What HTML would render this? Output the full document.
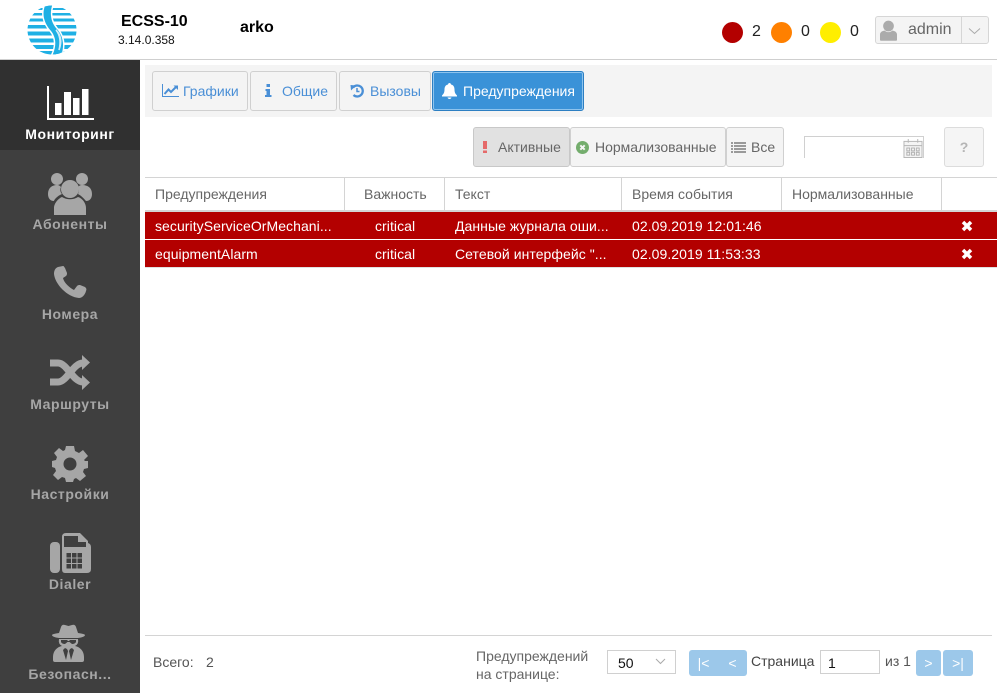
<!DOCTYPE html>
<html><head><meta charset="utf-8"><style>
*{box-sizing:border-box}
html,body{margin:0;padding:0;width:997px;height:693px;overflow:hidden;background:#fff;font-family:"Liberation Sans",sans-serif;font-size:14px;color:#333}
.a{position:absolute;white-space:nowrap}
.btn{position:absolute;background:#f4f4f4;border:1px solid #d0d0d0;border-radius:3px;height:40px;line-height:38px;color:#666;white-space:nowrap}
.btn svg{position:absolute}
.btn span{position:absolute;top:0}
.tab{color:#4a8fd6}
.nl{position:absolute;left:0;width:140px;text-align:center;font-weight:bold;color:#a6a6a6;font-size:14px;white-space:nowrap;letter-spacing:.55px}
.th{position:absolute;top:186px;color:#666;line-height:16px}
.td{position:absolute;color:#fff;line-height:16px;white-space:nowrap;letter-spacing:.06px}
.v{position:absolute;width:1px;background:#d4d4d4;top:178px;height:32px}
.pg{position:absolute;top:650px;height:26px;background:#9cc8ea;border-radius:3px;color:#fff;text-align:center;line-height:26px;font-size:14px}
</style></head><body>

<!-- header -->
<svg class="a" style="left:26px;top:4px" width="52" height="52" viewBox="0 0 52 52">
<defs><clipPath id="c"><circle cx="26" cy="26" r="24.500"/></clipPath></defs>
<g clip-path="url(#c)">
<g fill="#1fb0e4">
<rect x="0" y="4" width="52" height="2"/><rect x="0" y="9" width="52" height="2.500"/><rect x="0" y="14.500" width="52" height="3"/><rect x="0" y="21" width="52" height="3.500"/><rect x="0" y="27.500" width="52" height="4"/><rect x="0" y="34.500" width="52" height="4"/><rect x="0" y="41" width="52" height="4"/><rect x="0" y="47" width="52" height="5"/>
</g>
<path d="M20 -1C15 10 18 19 25 27C30 33 31 42 26 52L35 52C39 41 37 31 30 24C25 18 23 9 27 -1Z" fill="#1fb0e4" stroke="#fff" stroke-width="3"/>
<path d="M20 -1C15 10 18 19 25 27C30 33 31 42 26 52L35 52C39 41 37 31 30 24C25 18 23 9 27 -1Z" fill="#1fb0e4"/>
<path d="M30 26C34 31 35 38 33 46C36 38 35 31 30 26Z" fill="#fff" stroke="#d5eef9" stroke-width="1.500"/>
</g></svg>
<div class="a" style="left:121px;top:13px;font-size:16px;font-weight:bold;color:#000;line-height:18px">ECSS-10</div>
<div class="a" style="left:118px;top:33px;font-size:12px;color:#111;line-height:14px">3.14.0.358</div>
<div class="a" style="left:240px;top:19px;font-size:16px;font-weight:bold;color:#000;line-height:18px">arko</div>

<div class="a" style="left:722px;top:22px;width:21px;height:21px;border-radius:50%;background:#b30000"></div>
<div class="a" style="left:752px;top:23px;font-size:16px;color:#222;line-height:18px">2</div>
<div class="a" style="left:771px;top:22px;width:21px;height:21px;border-radius:50%;background:#ff8000"></div>
<div class="a" style="left:801px;top:23px;font-size:16px;color:#222;line-height:18px">0</div>
<div class="a" style="left:820px;top:22px;width:21px;height:21px;border-radius:50%;background:#ffee00"></div>
<div class="a" style="left:850px;top:23px;font-size:16px;color:#222;line-height:18px">0</div>

<div class="a" style="left:875px;top:16px;width:114px;height:28px;background:#f4f4f4;border:1px solid #d6d6d6;border-radius:3px"></div>
<div class="a" style="left:961px;top:17px;width:1px;height:26px;background:#d6d6d6"></div>
<svg class="a" style="left:880px;top:20px" width="17" height="21" viewBox="0 0 19 23"><circle cx="9.500" cy="6.500" r="6" fill="#ababab"/><path d="M0 22V16C0 13 3 12 5 11.500C8 14 11 14 14 11.500C16 12 19 13 19 16V22Q19 23 18 23H1Q0 23 0 22Z" fill="#ababab"/></svg>
<div class="a" style="left:908px;top:21px;font-size:16px;color:#666;line-height:18px">admin</div>
<svg class="a" style="left:968px;top:27px" width="13" height="8" viewBox="0 0 13 8"><path d="M1 1.500L6.500 6.500L12 1.500" fill="none" stroke="#aaa" stroke-width="1"/></svg>
<div class="a" style="left:0;top:59px;width:997px;height:1px;background:#cfcfcf"></div>

<!-- sidebar -->
<div class="a" style="left:0;top:60px;width:140px;height:633px;background:#3f3f3f"></div>
<div class="a" style="left:0;top:60px;width:140px;height:90px;background:#303030"></div>
<svg class="a" style="left:47px;top:86px" width="47" height="35" viewBox="0 0 47 35"><path d="M0 0H2V32H47V34H0Z" fill="#fff"/><rect x="8" y="17" width="6.500" height="12" fill="#fff"/><rect x="17" y="6" width="7" height="23" fill="#fff"/><rect x="26" y="12" width="6.500" height="17" fill="#fff"/><rect x="35" y="3" width="6.500" height="26" fill="#fff"/></svg>
<div class="nl" style="top:126px;color:#fff;line-height:16px">Мониторинг</div>

<svg class="a" style="left:48px;top:173px" width="44" height="42" viewBox="0 0 44 42" fill="#a6a6a6"><circle cx="9" cy="6" r="6"/><circle cx="34" cy="6" r="6"/><path d="M0 21C0 15 4 12 9 12C11 12 12 13 13 14C12 16 12 19 14 21C9 23 6 27 6 28C2 28 0 25 0 21Z"/><path d="M44 21C44 15 40 12 34 12C32 12 31 13 30 14C31 16 31 19 30 21C34 23 37 27 38 28C42 28 44 25 44 21Z"/><circle cx="22" cy="16" r="9"/><path d="M6 42V35C6 30 11 25 14 24C19 27 25 27 30 24C34 25 38 30 38 35V42Z"/></svg>
<div class="nl" style="top:216px;line-height:16px">Абоненты</div>

<svg class="a" style="left:53px;top:266px" width="34" height="33" viewBox="0 0 34 33" fill="#a6a6a6"><path d="M5 1L10 0C11 0 11 1 12 2L14 7C14 8 14 9 13 10L10 12C11 17 17 22 21 24L24 20C25 19 26 19 27 19L32 21C33 22 34 23 33 25C32 29 29 32 26 32C14 31 2 18 1 8C1 5 2 2 5 1Z"/></svg>
<div class="nl" style="top:306px;line-height:16px">Номера</div>

<svg class="a" style="left:49px;top:354px" width="42" height="37" viewBox="0 0 42 37"><path d="M1 9H9C18 9 24 28 34 28M1 28H9C18 28 24 9 34 9" fill="none" stroke="#a6a6a6" stroke-width="7"/><path d="M33 1L41 8.500L33 16ZM33 21L41 28.500L33 36Z" fill="#a6a6a6"/></svg>
<div class="nl" style="top:396px;line-height:16px">Маршруты</div>

<svg class="a" style="left:52px;top:446px" width="36" height="36" viewBox="0 0 36 36"><path fill="#a6a6a6" fill-rule="evenodd" d="M14 0H22L23 5L27 7L31 4L36 10L32 14L33 15L36 15V22L32 23L31 26L34 30L28 35L24 32L22 33L21 36H14L13 32L10 31L6 34L1 29L4 25L3 22L0 21V15L4 14L5 11L2 7L7 2L11 5L13 4ZM18 11.500A6.500 6.500 0 1 0 18 24.500A6.500 6.500 0 1 0 18 11.500Z"/></svg>
<div class="nl" style="top:486px;line-height:16px">Настройки</div>

<svg class="a" style="left:50px;top:533px" width="41" height="41" viewBox="0 0 41 41"><rect x="0" y="9" width="10" height="31" rx="4" fill="#a6a6a6"/><path d="M12 4Q12 0 16 0H30L38 8V10Q41 11 41 14V36Q41 40 37 40H15Q12 40 12 36Z" fill="#a6a6a6"/><path d="M14 3H28V9H36V14H14Z" fill="#3f3f3f"/><g fill="#3f3f3f"><rect x="16.500" y="20" width="4.500" height="4.500"/><rect x="22" y="20" width="4.500" height="4.500"/><rect x="27.500" y="20" width="4.500" height="4.500"/><rect x="16.500" y="25.500" width="4.500" height="4.500"/><rect x="22" y="25.500" width="4.500" height="4.500"/><rect x="27.500" y="25.500" width="4.500" height="4.500"/><rect x="16.500" y="31" width="4.500" height="4.500"/><rect x="22" y="31" width="4.500" height="4.500"/><rect x="27.500" y="31" width="4.500" height="4.500"/></g></svg>
<div class="nl" style="top:576px;line-height:16px">Dialer</div>

<svg class="a" style="left:52px;top:624px" width="33" height="38" viewBox="0 0 33 38"><path fill="#a6a6a6" d="M9 3Q10 0 13 1L16.500 2L20 1Q23 0 24 3L26 9Q33 10 33 11Q33 13 26 14H7Q0 13 0 11Q0 10 7 9Z"/><path fill="#a6a6a6" d="M7 15H26Q27 20 23 22C28 23 32 27 32 33V36Q32 38 30 38H3Q1 38 1 36V33C1 27 5 23 10 22Q6 20 7 15Z"/><path fill="#3f3f3f" d="M9 16H15L16 17H17L18 16H24V18Q23 20 20 20L17.500 18H15.500L13 20Q10 20 9 18Z"/><path fill="#3f3f3f" d="M13 24L15 25L16 27L14 36L11 26ZM20 24L18 25L17 27L19 36L22 26Z"/></svg>
<div class="nl" style="top:666px;line-height:16px">Безопасн...</div>

<!-- tabs -->
<div class="a" style="left:145px;top:65px;width:847px;height:52px;background:#f4f4f4"></div>
<div class="btn tab" style="left:152px;top:71px;width:96px">
<svg style="left:9px;top:12px" width="17" height="13" viewBox="0 0 17 13"><path d="M0.500 0V12.500H17" fill="none" stroke="#4a8fd6" stroke-width="1"/><path d="M2.500 10L6.500 5.500L9 8L14 3" fill="none" stroke="#4a8fd6" stroke-width="2"/><path d="M11.500 1.500H16V6Z" fill="#4a8fd6"/></svg>
<span style="left:30px">Графики</span></div>
<div class="btn tab" style="left:250px;top:71px;width:87px">
<svg style="left:13px;top:12px" width="8" height="13" viewBox="0 0 8 13" fill="#4a8fd6"><rect x="2.500" y="0" width="3.500" height="3"/><path d="M1.500 5H6V11H7.500V13H1V11H2.500V7H1.500Z"/></svg>
<span style="left:31px">Общие</span></div>
<div class="btn tab" style="left:339px;top:71px;width:92px">
<svg style="left:10px;top:12px" width="14" height="14" viewBox="0 0 14 14"><path d="M3 3.500A5.500 5.500 0 1 1 3.500 11" fill="none" stroke="#4a8fd6" stroke-width="2.300"/><path d="M0.500 1L6 1.500L1 6.500Z" fill="#4a8fd6"/><path d="M7 4V7.500H9.500" fill="none" stroke="#4a8fd6" stroke-width="1.500"/></svg>
<span style="left:30px">Вызовы</span></div>
<div class="btn" style="left:432px;top:71px;width:152px;background:#3a92d8;border-color:#2d7fc2;box-shadow:inset 0 0 0 1px #8ec4ee;color:#fff">
<svg style="left:9px;top:11px" width="15" height="16" viewBox="0 0 15 16" fill="#fff"><path d="M7.500 0C8.500 0 9 1 9 1.500C11.500 2 12.500 4 12.500 6.500C12.500 9.500 13.500 11 15 12.500V13.500H0V12.500C1.500 11 2.500 9.500 2.500 6.500C2.500 4 3.500 2 6 1.500C6 1 6.500 0 7.500 0Z"/><path d="M5.500 14.500H9.500Q9 16 7.500 16Q6 16 5.500 14.500Z"/></svg>
<span style="left:30px">Предупреждения</span></div>

<!-- filter -->
<div class="btn" style="left:473px;top:127px;width:97px;background:#e1e1e1;border-color:#c8c8c8">
<svg style="left:9px;top:13px" width="4" height="12" viewBox="0 0 4 12" fill="#e56a6a"><rect x="0" y="0" width="4" height="8"/><rect x="0" y="9.500" width="4" height="2.500"/></svg>
<span style="left:24px">Активные</span></div>
<div class="btn" style="left:570px;top:127px;width:156px">
<svg style="left:5px;top:13px" width="13" height="13" viewBox="0 0 13 13"><circle cx="6.500" cy="6.500" r="6.500" fill="#74ad6d"/><path d="M4.300 4.300L8.700 8.700M8.700 4.300L4.300 8.700" stroke="#f4f4f4" stroke-width="2"/></svg>
<span style="left:24px">Нормализованные</span></div>
<div class="btn" style="left:726px;top:127px;width:58px">
<svg style="left:4px;top:14px" width="15" height="11" viewBox="0 0 15 11" fill="#9a9a9a"><rect x="0" y="0" width="2" height="2"/><rect x="3" y="0" width="12" height="2"/><rect x="0" y="3" width="2" height="2"/><rect x="3" y="3" width="12" height="2"/><rect x="0" y="6" width="2" height="2"/><rect x="3" y="6" width="12" height="2"/><rect x="0" y="9" width="2" height="2"/><rect x="3" y="9" width="12" height="2"/></svg>
<span style="left:24px">Все</span></div>

<div class="a" style="left:804px;top:136px;width:120px;height:22px;border-top:1px solid #d0d0d0;border-left:1px solid #d0d0d0;border-right:1px solid #d0d0d0"></div>
<svg class="a" style="left:903px;top:139px" width="20" height="19" viewBox="0 0 20 20"><rect x="0.500" y="2.500" width="19" height="17" fill="#f4f4f4" stroke="#b5b5b5"/><path d="M0.500 7H19.500M5 0V4M15 0V4" stroke="#b5b5b5"/><g fill="none" stroke="#b0b0b0"><rect x="3.500" y="9.500" width="3" height="3"/><rect x="8.500" y="9.500" width="3" height="3"/><rect x="13.500" y="9.500" width="3" height="3"/><rect x="3.500" y="14" width="3" height="3"/><rect x="8.500" y="14" width="3" height="3"/><rect x="13.500" y="14" width="3" height="3"/></g></svg>
<div class="btn" style="left:944px;top:127px;width:40px;text-align:center;color:#b5b5b5;font-weight:bold;font-size:14px;background:#f5f5f5;border-color:#dcdcdc">?</div>

<!-- table -->
<div class="a" style="left:145px;top:177px;width:852px;height:1px;background:#d4d4d4"></div>
<div class="a" style="left:145px;top:210px;width:852px;height:2px;background:#d4d4d4"></div>
<div class="v" style="left:344px"></div><div class="v" style="left:444px"></div><div class="v" style="left:621px"></div><div class="v" style="left:781px"></div><div class="v" style="left:941px"></div>
<div class="th" style="left:155px">Предупреждения</div>
<div class="th" style="left:364px">Важность</div>
<div class="th" style="left:455px">Текст</div>
<div class="th" style="left:632px">Время события</div>
<div class="th" style="left:792px">Нормализованные</div>

<div class="a" style="left:145px;top:212px;width:852px;height:27px;background:#b30000"></div>
<div class="a" style="left:145px;top:240px;width:852px;height:27px;background:#b30000"></div>
<div class="a" style="left:145px;top:267px;width:852px;height:1px;background:#e0e0e0"></div>
<div class="td" style="left:155px;top:218px">securityServiceOrMechani...</div>
<div class="td" style="left:375px;top:218px">critical</div>
<div class="td" style="left:455px;top:218px">Данные журнала оши...</div>
<div class="td" style="left:632px;top:218px">02.09.2019 12:01:46</div>
<svg class="a" style="left:961px;top:220px" width="12" height="12" viewBox="0 0 12 12"><path d="M2 2L10 10M10 2L2 10" stroke="#fff" stroke-width="3.500"/></svg>
<div class="td" style="left:155px;top:246px">equipmentAlarm</div>
<div class="td" style="left:375px;top:246px">critical</div>
<div class="td" style="left:455px;top:246px">Сетевой интерфейс "...</div>
<div class="td" style="left:632px;top:246px">02.09.2019 11:53:33</div>
<svg class="a" style="left:961px;top:248px" width="12" height="12" viewBox="0 0 12 12"><path d="M2 2L10 10M10 2L2 10" stroke="#fff" stroke-width="3.500"/></svg>

<!-- footer -->
<div class="a" style="left:145px;top:635px;width:847px;height:1px;background:#d4d4d4"></div>
<div class="a" style="left:153px;top:654px;color:#555;line-height:16px">Всего:</div>
<div class="a" style="left:206px;top:654px;color:#555;line-height:16px">2</div>
<div class="a" style="left:476px;top:647px;color:#666;line-height:18px">Предупреждений<br>на странице:</div>
<div class="a" style="left:607px;top:650px;width:69px;height:24px;border:1px solid #d0d0d0;background:#fff"></div>
<div class="a" style="left:618px;top:655px;color:#111;line-height:16px">50</div>
<svg class="a" style="left:655px;top:658px" width="11" height="7" viewBox="0 0 11 7"><path d="M1 1L5.500 5.500L10 1" fill="none" stroke="#aaa"/></svg>
<div class="pg" style="left:689px;width:29px;border-radius:3px 0 0 3px">|&lt;</div>
<div class="pg" style="left:718px;width:29px;border-radius:0 3px 3px 0">&lt;</div>
<div class="a" style="left:751px;top:653px;color:#444;line-height:16px">Страница</div>
<div class="a" style="left:820px;top:650px;width:60px;height:24px;border:1px solid #d0d0d0;background:#fff"></div>
<div class="a" style="left:828px;top:655px;color:#111;line-height:16px">1</div>
<div class="a" style="left:885px;top:653px;color:#555;line-height:16px">из 1</div>
<div class="pg" style="left:916px;width:25px">&gt;</div>
<div class="pg" style="left:943px;width:30px">&gt;|</div>
</body></html>
